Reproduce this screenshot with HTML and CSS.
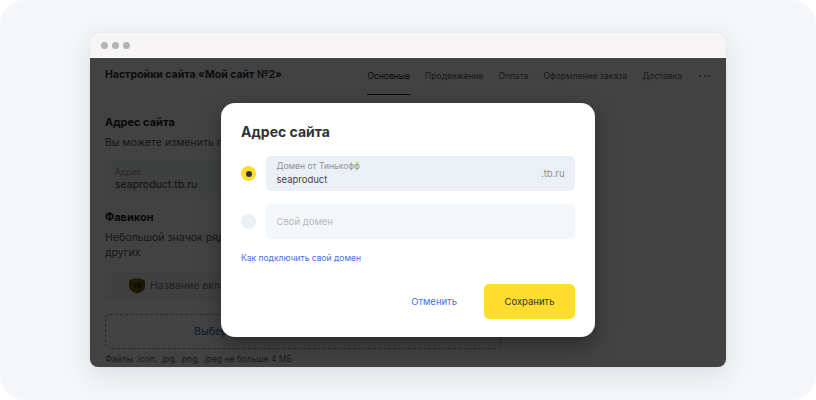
FILE: index.html
```html
<!DOCTYPE html>
<html lang="ru">
<head>
<meta charset="utf-8">
<title>Настройки сайта</title>
<link rel="stylesheet" href="styles.css">
</head>
<body>
<div class="stage">
  <div class="window">
    <div class="chrome">
      <span class="dot"></span><span class="dot"></span><span class="dot"></span>
    </div>
    <div class="viewport">
      <div class="page">
        <header class="topbar">
          <h1 class="page-title">Настройки сайта «Мой сайт №2»</h1>
          <nav class="tabs">
            <span class="tab tab-active">Основные</span>
            <span class="tab">Продвижение</span>
            <span class="tab">Оплата</span>
            <span class="tab">Оформление заказа</span>
            <span class="tab">Доставка</span>
            <span class="more"><i></i><i></i><i></i></span>
          </nav>
        </header>
        <section class="section section-address">
          <h2 class="section-title">Адрес сайта</h2>
          <p class="section-text">Вы можете изменить поддомен или подключить свой домен</p>
          <div class="address-box">
            <span class="address-label">Адрес</span>
            <span class="address-value">seaproduct.tb.ru</span>
          </div>
        </section>
        <section class="section section-favicon">
          <h2 class="section-title">Фавикон</h2>
          <p class="section-text">Небольшой значок рядом с названием сайта,<br>других</p>
          <div class="tab-preview">
            <svg class="shield" width="16" height="16" viewBox="0 0 16 16"><path d="M0 2.5C2.5 1 5 .5 8 .5s5.500.5 8 2v6.500c0 3-4 5.500-8 6.500-4-1-8-3.500-8-6.500z" fill="#6e6410"/></svg>
            <span class="preview-mark">ТВ</span>
            <span class="preview-name">Название вкладки</span>
          </div>
          <div class="dropzone"><span class="drop-link">Выберите файл</span> или перетащите его сюда</div>
          <p class="hint">Файлы .icon, .jpg, .png, .jpeg не больше 4 МБ</p>
        </section>
      </div>
      <div class="scrim"></div>
      <div class="modal">
        <h2 class="modal-title">Адрес сайта</h2>
        <div class="option option-first">
          <span class="radio radio-on"><i></i></span>
          <div class="field field-on">
            <div class="field-text">
              <span class="field-label">Домен от Тинькофф</span>
              <span class="field-value">seaproduct</span>
            </div>
            <span class="suffix">.tb.ru</span>
          </div>
        </div>
        <div class="option option-second">
          <span class="radio"></span>
          <div class="field field-off">Свой домен</div>
        </div>
        <a class="help-link">Как подключить свой домен</a>
        <div class="actions">
          <button class="btn-cancel" type="button">Отменить</button>
          <button class="btn-save" type="button">Сохранить</button>
        </div>
      </div>
    </div>
  </div>
</div>
</body>
</html>
```
FILE: styles.css
```css
* { box-sizing: border-box; }
html, body { margin: 0; height: 400px; overflow: hidden; background: #fff; }
body { font-family: Inter, "Liberation Sans", sans-serif; color: #333; }
p, h1, h2 { margin: 0; }

.stage {
  width: 816px; height: 400px; padding: 33px 90px;
  background: #f4f6f9; border-radius: 24px;
}
.window {
  display: flex; flex-direction: column;
  width: 636px; height: 334px;
  border-radius: 8px; overflow: hidden;
  box-shadow: 0 8px 24px rgba(40, 50, 70, .12), 0 0 1px rgba(40, 50, 70, .25);
}
.chrome {
  flex: none; height: 25px; padding-left: 11px;
  display: flex; align-items: center; gap: 4px;
  background: #f6f4f5; border-bottom: 1px solid #fff;
}
.dot { width: 7px; height: 7px; border-radius: 50%; background: #b3b3b5; }

.viewport { position: relative; flex: 1; overflow: hidden; background: #fff; }
.page { padding: 0 15px; color: #333; }
.scrim { position: absolute; inset: 0; background: rgba(0, 0, 0, .74); }

.topbar {
  display: flex; justify-content: space-between; align-items: flex-start;
  height: 37px; padding-right: 1px;
}
.page-title { font-size: 10.500px; font-weight: 700; line-height: 16px; padding-top: 9px; box-sizing: content-box; }
.tabs { display: flex; gap: 15px; font-size: 8.500px; line-height: 12px; color: #666; }
.tab { height: 37px; padding-top: 12px; }
.tab-active { color: #222; border-bottom: 1px solid #222; height: 37px; }
.more { display: flex; gap: 2.500px; padding-top: 17px; margin-left: 2px; }
.more i { width: 2px; height: 2px; border-radius: 50%; background: #777; }

.section-title { font-size: 11px; font-weight: 700; line-height: 16px; color: #222; }
.section-text { font-size: 10.500px; line-height: 15.500px; margin-top: 5px; color: #555; }
.section-address { padding-top: 19px; }
.address-box {
  display: flex; flex-direction: column;
  width: 200px; height: 34px; margin-top: 9px; padding: 6px 10px;
  border-radius: 5px; background: #f4f5f7;
}
.address-label { font-size: 8.500px; line-height: 12px; color: #999; }
.address-value { font-size: 10.500px; line-height: 14px; color: #444; }
.section-favicon { padding-top: 15px; }
.section-favicon .section-text { margin-top: 5px; }
.tab-preview {
  position: relative; display: flex; align-items: center;
  width: 396px; height: 28px; margin-top: 11px; padding-left: 24px; gap: 5px;
  background: #f5f5f6; font-size: 10.500px; color: #777;
}
.shield { flex: none; }
.preview-mark { position: absolute; left: 28px; width: 9px; font-size: 6px; font-weight: 800; color: #222; }
.preview-name { white-space: nowrap; }
.dropzone {
  width: 396px; height: 35px; margin-top: 14px;
  display: flex; align-items: center; justify-content: center; gap: 3px;
  border: 1px dashed #aaa; border-radius: 5px;
  font-size: 10.500px; color: #666; white-space: pre;
}
.drop-link { color: #3a64c8; }
.hint { margin-top: 4px; font-size: 8.500px; line-height: 12px; color: #666; }

.modal {
  position: absolute; left: 131px; top: 45px;
  width: 374px; height: 234px; padding: 20px;
  border-radius: 14px; background: #fff;
  box-shadow: 0 8px 20px rgba(0, 0, 0, .35);
}
.modal-title { font-size: 14px; font-weight: 700; line-height: 18px; color: #333; }
.option { display: flex; align-items: center; gap: 10px; }
.option-first { margin-top: 15px; }
.option-second { margin-top: 13px; }
.radio {
  flex: none; width: 15px; height: 15px; border-radius: 50%;
  display: flex; align-items: center; justify-content: center;
  background: #ebf0f7;
}
.radio-on { background: #ffdd2d; }
.radio-on i { width: 6px; height: 6px; border-radius: 50%; background: #333; }
.field { flex: 1; height: 35px; border-radius: 5px; padding: 0 10.500px; display: flex; align-items: center; }
.field-on { justify-content: space-between; background: #ebf0f7; }
.field-off { background: #f4f7fa; font-size: 9.500px; color: #b8b8b8; }
.field-text { display: flex; flex-direction: column; }
.field-label { font-size: 8.500px; line-height: 12px; color: #8f8f8f; }
.field-value { font-size: 9.500px; line-height: 15px; color: #444; }
.suffix { font-size: 9.500px; color: #8f8f8f; }
.help-link { display: block; margin-top: 13px; font-size: 8.500px; line-height: 12px; color: #3f72e8; }
.actions { display: flex; justify-content: flex-end; align-items: center; margin-top: 20px; gap: 27px; }
.btn-cancel, .btn-save {
  font-family: inherit; font-size: 9.500px; border: 0; padding: 0;
}
.btn-cancel { background: none; color: #3f72e8; }
.btn-save { width: 91px; height: 35px; border-radius: 5px; background: #ffdd2d; color: #333; }
```
